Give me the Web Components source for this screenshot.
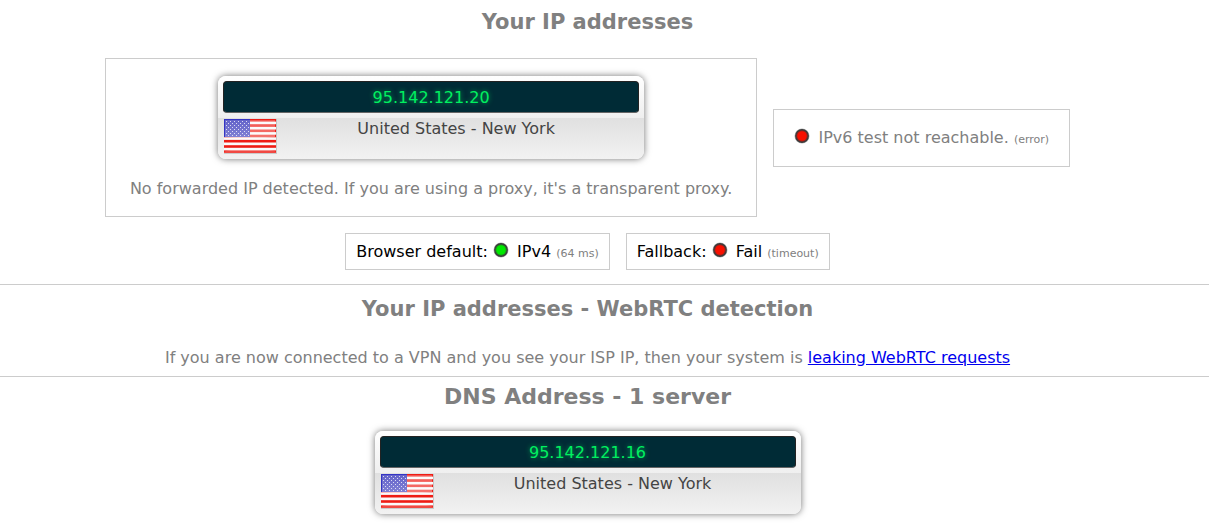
<!DOCTYPE html>
<html lang="en">
<head>
<meta charset="utf-8">
<title>IP addresses</title>
<style>
  body { margin: 0; background: #fff; font: 16px/24px "DejaVu Sans", Verdana, sans-serif; color: gray; }
</style>
</head>
<body>
<leak-page></leak-page>
<script>
const define = (name, html) => {
  const tpl = document.createElement('template');
  tpl.innerHTML = html;
  customElements.define(name, class extends HTMLElement {
    constructor() {
      super();
      this.attachShadow({ mode: 'open' }).append(tpl.content.cloneNode(true));
    }
  });
};

define('status-led', `
<style>
  :host { display: inline-block; width: 16px; height: 16px; }
  svg { display: block; }
  .glow { fill: #f81000; }
  :host([state="ok"]) .glow { fill: #00e800; }
</style>
<svg width="16" height="16" viewBox="0 0 16 16" aria-hidden="true">
  <circle cx="8" cy="8" r="7.5" fill="#000" opacity=".3"/>
  <circle cx="8" cy="8" r="6.9" fill="#111" opacity=".75"/>
  <circle class="glow" cx="8" cy="8" r="5.8" opacity=".4"/>
  <circle class="glow" cx="8" cy="8" r="4.8"/>
</svg>`);

define('us-flag', `
<style>
  :host { display: block; width: 54px; height: 36px; }
  svg { display: block; }
</style>
<svg width="54" height="36" viewBox="0 0 54 36" role="img" aria-label="United States">
  <defs>
    <linearGradient id="shine" x1="0" y1="0" x2="0" y2="1">
      <stop offset="0" stop-color="#fff" stop-opacity=".25"/>
      <stop offset="1" stop-color="#fff" stop-opacity=".4"/>
    </linearGradient>
    <pattern id="stars" width="4" height="4" patternUnits="userSpaceOnUse">
      <path d="M1 1h1v1H1zM3 3h1v1H3z" fill="#fff" opacity=".75"/>
    </pattern>
  </defs>
  <rect x="1" y="1" width="53" height="35" fill="#888" opacity=".35"/>
  <rect x="1" y="1" width="52" height="34" fill="#fafafa"/>
  <g fill="#ee1c14">
    <rect x="1" y="1" width="52" height="2.6"/><rect x="1" y="6.2" width="52" height="2.7"/>
    <rect x="1" y="11.5" width="52" height="2.6"/><rect x="1" y="16.7" width="52" height="2.6"/>
    <rect x="1" y="21.9" width="52" height="2.6"/><rect x="1" y="27.2" width="52" height="2.6"/>
    <rect x="1" y="32.4" width="52" height="2.6"/>
  </g>
  <rect x="1" y="1" width="26" height="18" fill="#3030b8"/>
  <rect x="2" y="2" width="25" height="16" fill="url(#stars)"/>
  <path d="M2 2h50v17Q27 22 2 19z" fill="url(#shine)"/>
  <path d="M1 34Q5 31 27 31t26 3v1H1z" fill="#fff" opacity=".2"/>
  <path d="M1.5 19V1.5H27" fill="none" stroke="#3434c4"/>
</svg>`);

define('ip-card', `
<style>
  :host {
    display: block; box-sizing: border-box; width: 426px; max-width: 100%;
    padding: 5px; border-radius: 8px;
    background: linear-gradient(#fff, #efefef 42px, #e0e0e0 42px, #f2f2f2);
    box-shadow: 0 0 7px rgba(0,0,0,.55);
  }
  .number {
    box-sizing: border-box; height: 32px; border-radius: 4px;
    border: 1px solid #222; border-bottom-color: #666;
    background: #002b36; color: #00f060; text-align: center;
    font: 16px/32px "DejaVu Sans", Verdana, sans-serif;
    text-shadow: 0 0 5px rgba(0,240,96,.6);
  }
  .place { display: flex; height: 36px; margin-top: 5px; }
  .name { flex: 1; color: #444; text-align: center; padding-right: 4px; line-height: 22px; }
</style>
<div class="number"><slot name="ip"></slot></div>
<div class="place"><us-flag></us-flag><div class="name"><slot></slot></div></div>`);

define('info-box', `
<style>
  :host { display: block; box-sizing: border-box; border: 1px solid #ccc; padding: 16px 20px; text-align: center; }
  :host([wide]) { padding: 17px 24px 15px; }
  :host([compact]) { padding: 6px 10px; line-height: 23px; color: #000; }
</style>
<slot></slot>`);

define('result-section', `
<style>
  :host { display: block; padding-right: 34px; text-align: center; }
  :host([ruled]) { border-bottom: 1px solid #ccc; }
  h2 { margin: 0; font: bold 21px/30px "DejaVu Sans", Verdana, sans-serif; }
  :host([large]) h2 { font-size: 22px; }
</style>
<h2><slot name="title"></slot></h2>
<slot></slot>`);

define('leak-page', `
<style>
  :host { display: block; }
  .row { display: flex; justify-content: center; align-items: center; gap: 16px; }
  .first { padding-top: 7px; padding-bottom: 14px; }
  .second { padding-top: 9px; padding-bottom: 6px; }
  .third { padding-top: 5px; padding-bottom: 10px; }
  .main { margin-top: 21px; }
  .defaults { margin-top: 16px; }
  ip-card { margin: 0 auto; }
  .third ip-card { margin-top: 19px; }
  p { margin: 18px 0 0; }
  .second p { margin-top: 22px; }
  small { font-size: 11px; line-height: 16px; color: gray; }
  status-led { margin-right: 3px; vertical-align: -1px; }
  a { color: #00e; }
</style>
<result-section class="first" ruled>
  <span slot="title">Your IP addresses</span>
  <div class="row main">
    <info-box wide>
      <ip-card><span slot="ip">95.142.121.20</span>United States - New York</ip-card>
      <p>No forwarded IP detected. If you are using a proxy, it's a transparent proxy.</p>
    </info-box>
    <info-box><status-led></status-led> IPv6 test not reachable. <small>(error)</small></info-box>
  </div>
  <div class="row defaults">
    <info-box compact>Browser default: <status-led state="ok"></status-led> IPv4 <small>(64 ms)</small></info-box>
    <info-box compact>Fallback: <status-led></status-led> Fail <small>(timeout)</small></info-box>
  </div>
</result-section>
<result-section class="second" ruled>
  <span slot="title">Your IP addresses - WebRTC detection</span>
  <p>If you are now connected to a VPN and you see your ISP IP, then your system is <a href="#webrtc">leaking WebRTC requests</a></p>
</result-section>
<result-section class="third" large>
  <span slot="title">DNS Address - 1 server</span>
  <ip-card><span slot="ip">95.142.121.16</span>United States - New York</ip-card>
</result-section>`);
</script>
</body>
</html>
